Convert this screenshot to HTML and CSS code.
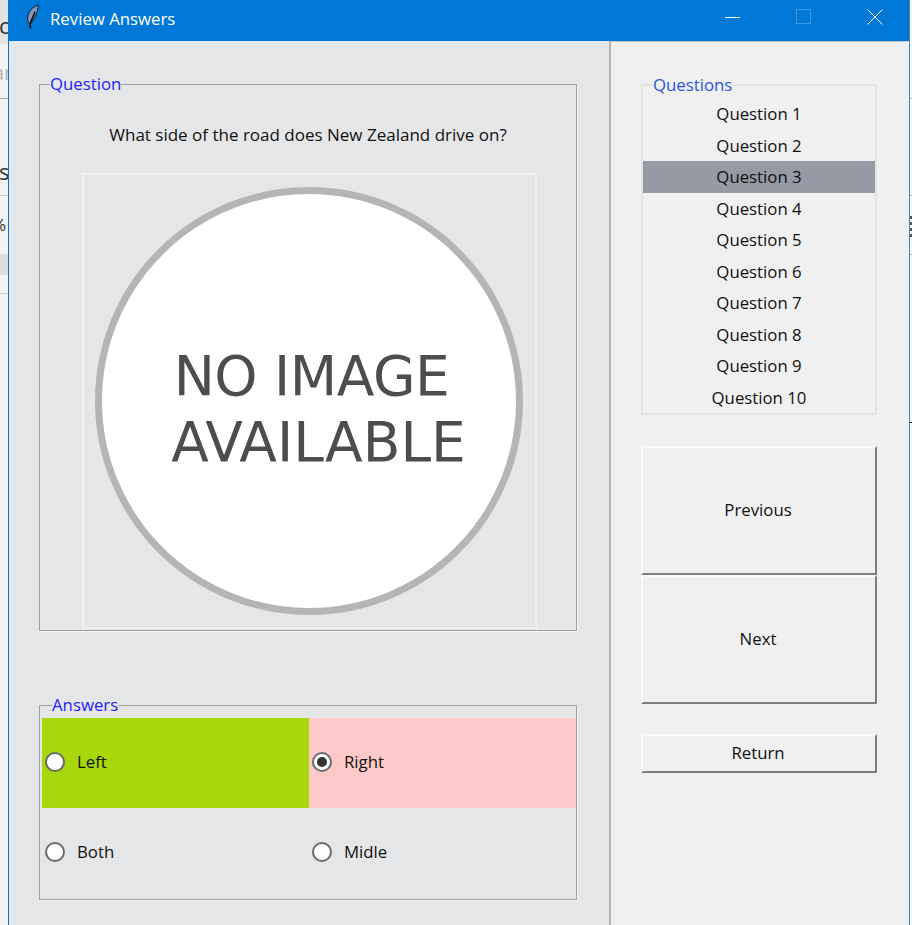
FILE: index.html
```html
<!DOCTYPE html>
<html lang="en">

<head>
    <meta charset="UTF-8">
    <meta name="viewport" content="width=device-width, initial-scale=1.0">
    <title>Review Answers</title>
    <link rel="stylesheet" href="styles.css">
</head>

<body>

    <div class="desktop-left">
        <div class="behind-top"></div>
        <span class="behind behind-c">c</span>
        <span class="behind behind-ar">ar</span>
        <span class="behind behind-s">s</span>
        <span class="behind behind-pct">%</span>
        <div class="behind-line line-1"></div>
        <div class="behind-line line-2"></div>
        <div class="behind-line line-3"></div>
        <div class="behind-band"></div>
    </div>

    <div class="window">
        <div class="titlebar">
            <svg class="feather" width="14" height="25" viewBox="0 0 14 25">
                <path d="M12.500 1C6 3 2 8 1.500 14C1.500 17 2.500 19 4 20C8 17 11.500 9 12.500 1Z" fill="#7f97b8" stroke="#141b28" stroke-width="1" />
                <path d="M9 8L4 20L4.500 24.500" fill="none" stroke="#05080d" stroke-width="1.600" />
            </svg>
            <span class="title">Review Answers</span>
            <div class="controls">
                <svg class="ctl" width="16" height="16" viewBox="0 0 16 16">
                    <path d="M0 8.500H15" stroke="#fff" stroke-width="1" />
                </svg>
                <svg class="ctl" width="16" height="16" viewBox="0 0 16 16">
                    <rect x="0.500" y="0.500" width="14" height="14" fill="none" stroke="#3a94e0" />
                </svg>
                <svg class="ctl" width="16" height="16" viewBox="0 0 16 16">
                    <path d="M0.500 0.500L15.500 15.500M15.500 0.500L0.500 15.500" stroke="#fff" stroke-width="1" />
                </svg>
            </div>
        </div>

        <div class="content">
            <div class="left-pane">
                <fieldset class="group question-group">
                    <legend>Question</legend>
                    <p class="question-text">What side of the road does New Zealand drive on?</p>
                    <div class="picture">
                        <div class="no-image">
                            <span class="line-no">NO IMAGE</span>
                            <span class="line-available">AVAILABLE</span>
                        </div>
                    </div>
                </fieldset>

                <fieldset class="group answers-group">
                    <legend>Answers</legend>
                    <div class="answers">
                        <div class="answer correct"><span class="radio"></span>Left</div>
                        <div class="answer wrong"><span class="radio checked"></span>Right</div>
                        <div class="answer"><span class="radio"></span>Both</div>
                        <div class="answer"><span class="radio"></span>Midle</div>
                    </div>
                </fieldset>
            </div>

            <div class="right-pane">
                <fieldset class="list-group">
                    <legend>Questions</legend>
                    <ul class="question-list">
                        <li>Question 1</li>
                        <li>Question 2</li>
                        <li class="selected">Question 3</li>
                        <li>Question 4</li>
                        <li>Question 5</li>
                        <li>Question 6</li>
                        <li>Question 7</li>
                        <li>Question 8</li>
                        <li>Question 9</li>
                        <li>Question 10</li>
                    </ul>
                </fieldset>
                <button class="btn btn-tall btn-prev">Previous</button>
                <button class="btn btn-tall">Next</button>
                <button class="btn btn-return">Return</button>
            </div>
        </div>
    </div>

    <div class="desktop-right">
        <div class="mark mark-1"></div>
        <div class="mark mark-2"></div>
        <div class="mark mark-3"></div>
        <div class="mark mark-4"></div>
        <div class="dots"></div>
    </div>

</body>

</html>
```

FILE: styles.css
```css
html,
body {
    margin: 0;
    height: 925px;
    overflow: hidden;
    background-color: #f0f0f0;
}

body {
    display: flex;
    font-family: "Open Sans", "Noto Sans", sans-serif;
    font-size: 16.800px;
    color: #111;
}

.desktop-left {
    position: relative;
    width: 8px;
    flex-shrink: 0;
    background-color: #f3f3f3;
    overflow: hidden;
}

.behind-top {
    position: absolute;
    top: 0;
    left: 0;
    width: 8px;
    height: 44px;
    background-color: #e2e2e2;
}

.behind {
    position: absolute;
    color: #333;
    line-height: 24px;
}

.behind-c {
    top: 13px;
    left: -1px;
    font-size: 22px;
}

.behind-ar {
    top: 61px;
    left: -7px;
    font-size: 20px;
    color: #b5b5b5;
}

.behind-s {
    top: 159px;
    left: -1px;
    font-size: 22px;
}

.behind-pct {
    top: 213px;
    left: -8px;
    font-size: 17px;
}

.behind-line {
    position: absolute;
    left: 0;
    width: 8px;
    height: 1px;
    background-color: #aaa;
}

.line-1 {
    top: 98px;
}

.line-2 {
    top: 195px;
    background-color: #c8c8c8;
}

.line-3 {
    top: 293px;
    background-color: #d0d0d0;
}

.behind-band {
    position: absolute;
    top: 254px;
    left: 0;
    width: 8px;
    height: 21px;
    background-color: #dcdcdc;
}

.desktop-right {
    position: relative;
    width: 2px;
    flex-shrink: 0;
    background-color: #f7f7f7;
}

.mark {
    position: absolute;
    left: 0;
    width: 2px;
    height: 1px;
    background-color: #bbb;
}

.mark-1 {
    top: 98px;
}

.mark-2 {
    top: 195px;
}

.mark-3 {
    top: 254px;
}

.mark-4 {
    top: 422px;
    background-color: #111;
}

.dots {
    position: absolute;
    top: 216px;
    left: 0;
    width: 2px;
    height: 21px;
    background: repeating-linear-gradient(#555 0 3px, transparent 3px 6px);
}

.window {
    flex: 1;
    min-width: 0;
    display: flex;
    flex-direction: column;
    border-left: 1px solid #0078d7;
    border-right: 1px solid #3b86c8;
}

.titlebar {
    display: flex;
    align-items: center;
    height: 41px;
    flex-shrink: 0;
    background-color: #0078d7;
    color: #fff;
    box-sizing: border-box;
    padding: 0 0 4px 17px;
}

.feather {
    margin: 0 10px 4px 0;
}

.controls {
    display: flex;
    align-items: center;
    gap: 55px;
    margin: 0 0 3px auto;
    padding-right: 26px;
}

.content {
    flex: 1;
    display: flex;
    min-height: 0;
}

.left-pane {
    width: 602px;
    box-sizing: border-box;
    flex-shrink: 0;
    padding: 33px 32px 0 30px;
    background-color: #e5e6e8;
    border-right: 2px solid #b4b4b4;
}

.group {
    margin: 0;
    padding: 0;
    border: 1px solid #a0a0a0;
    box-shadow: 1px 1px 0 #f7f7f7;
}

.group legend {
    margin-left: 10px;
    padding: 0;
    color: #2222ff;
    line-height: 20px;
}

.question-group {
    height: 557px;
    box-sizing: border-box;
    display: flex;
    flex-direction: column;
    align-items: center;
}

.question-text {
    margin: 30px 0 27px;
    line-height: 22px;
    font-size: 17px;
    text-align: center;
}

.picture {
    box-sizing: border-box;
    width: 455px;
    height: 456px;
    margin-left: 2px;
    border: 2px solid #f0f1f2;
    padding: 12px 0 0 11px;
}

.no-image {
    box-sizing: border-box;
    width: 428px;
    height: 428px;
    padding-top: 16px;
    border: 7px solid #b5b5b5;
    border-radius: 50%;
    background-color: #fff;
    display: flex;
    flex-direction: column;
    align-items: center;
    justify-content: center;
    color: #4d4d4d;
    font-family: "DejaVu Sans", sans-serif;
    font-size: 55px;
    line-height: 66px;
}

.no-image span {
    position: relative;
}

.line-no {
    left: 3px;
    letter-spacing: -0.5px;
}

.line-available {
    left: 10px;
}

.answers-group {
    margin-top: 64px;
    height: 205px;
    box-sizing: border-box;
    padding: 3px 0 0 2px;
}

.answers {
    display: grid;
    grid-template-columns: 267px 267px;
    grid-template-rows: 90px 90px;
}

.answer {
    display: flex;
    align-items: center;
    padding: 0 0 3px 3px;
    gap: 12px;
}

.correct {
    background-color: #a8d80c;
}

.wrong {
    background-color: #ffc9c9;
}

.radio {
    box-sizing: border-box;
    width: 20px;
    height: 20px;
    border: 2px solid #6a6a6a;
    border-radius: 50%;
    background-color: #fff;
    display: flex;
    align-items: center;
    justify-content: center;
}

.radio.checked::after {
    content: "";
    width: 10px;
    height: 10px;
    border-radius: 50%;
    background-color: #333;
}

.right-pane {
    flex: 1;
    box-sizing: border-box;
    padding: 33px 0 0 30px;
    background-color: #f0f0f0;
    border-top: 1px solid #c6c6c6;
}

.list-group {
    width: 236px;
    box-sizing: border-box;
    margin: 0 0 31px;
    padding: 3px 0 0;
    border: 2px solid #e4e4e4;
}

.list-group legend {
    margin-left: 10px;
    padding: 0;
    color: #2a55e0;
    line-height: 20px;
}

.question-list {
    margin: 0;
    padding: 0;
    list-style: none;
    text-align: center;
}

.question-list li {
    height: 31.500px;
    line-height: 31.500px;
}

.question-list .selected {
    background-color: #959aa5;
}

.btn {
    display: block;
    width: 236px;
    box-sizing: border-box;
    background-color: #f0f0f0;
    border: 2px solid;
    border-color: #fafafa #7e7e7e #7e7e7e #fafafa;
    font-family: inherit;
    font-size: 16.800px;
    color: #111;
    padding: 0 2px 2px 0;
}

.btn-tall {
    height: 129px;
}

.btn-return {
    height: 39px;
    margin-top: 30px;
}
```
